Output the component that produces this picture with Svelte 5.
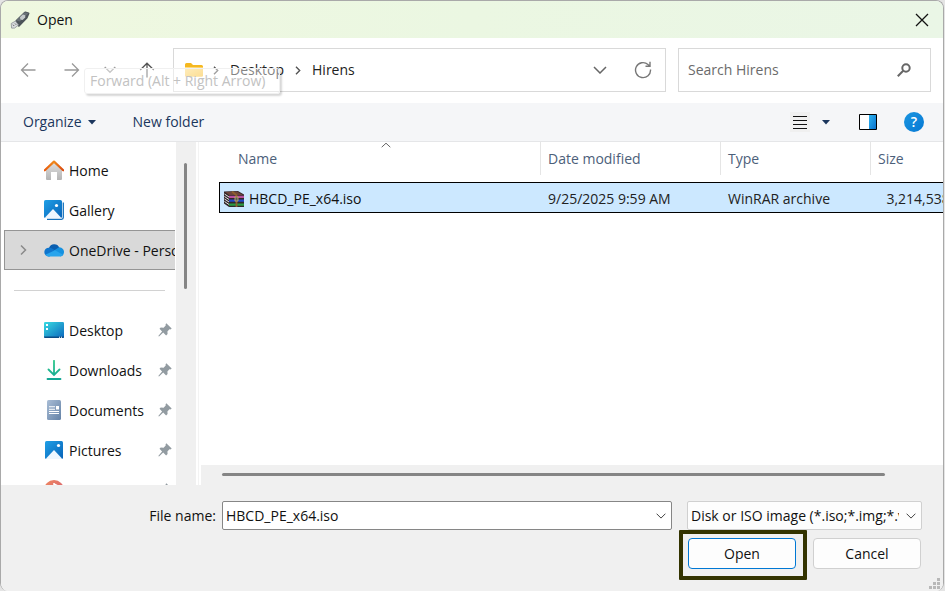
<script lang="ts">
	type Place = { name: string; icon: string; pinned?: boolean };

	const roots: Place[] = [
		{ name: 'Home', icon: 'home' },
		{ name: 'Gallery', icon: 'gallery' },
		{ name: 'OneDrive - Personal', icon: 'onedrive' }
	];

	const pinned: Place[] = [
		{ name: 'Desktop', icon: 'desktop', pinned: true },
		{ name: 'Downloads', icon: 'downloads', pinned: true },
		{ name: 'Documents', icon: 'documents', pinned: true },
		{ name: 'Pictures', icon: 'pictures', pinned: true },
		{ name: 'Music', icon: 'music', pinned: true }
	];

	const files = [
		{ name: 'HBCD_PE_x64.iso', modified: '9/25/2025 9:59 AM', type: 'WinRAR archive', size: '3,214,538 KB' }
	];

	let current = $state('OneDrive - Personal');
	let selected = $state('HBCD_PE_x64.iso');
	let fileName = $state('HBCD_PE_x64.iso');

	function pick(name: string) {
		selected = name;
		fileName = name;
	}
</script>

{#snippet placeIcon(icon: string)}
	<svg class="place-icon" viewBox="0 0 20 20" aria-hidden="true">
		{#if icon === 'home'}
			<path d="M2 9.500 10 2l8 7.500V19a1 1 0 0 1-1 1h-4v-8H7v8H3a1 1 0 0 1-1-1z" fill="url(#g-wall)" />
			<path d="M.8 10.300 10 1.600l9.200 8.700" fill="none" stroke="url(#g-roof)" stroke-width="2.200" stroke-linejoin="round" stroke-linecap="round" />
		{:else if icon === 'gallery'}
			<path d="M3 19.300h14.500a1.800 1.800 0 0 0 1.800-1.800V2.500" fill="none" stroke="#1672bd" stroke-width="1.300" />
			<rect width="18" height="18" rx="1.600" fill="url(#g-blue)" />
			<path d="M1 17.500 9 9l8 8.500q-.5.5-1 .5H2q-.6 0-1-.5z" fill="#eef7ff" />
			<circle cx="12.500" cy="5.500" r="1.600" fill="#fff" />
		{:else if icon === 'onedrive'}
			<path d="M5 8a5.500 5.500 0 0 1 10.300-.5L12 12 5 10z" fill="#0a5eb0" />
			<path d="M4.500 16.500A4.400 4.400 0 0 1 5 7.700q2 0 3.500 1l5 3-8 4.800z" fill="#0f75cd" />
			<path d="M10 10.500 15 7.300a4.700 4.700 0 0 1 4.800 6 4 4 0 0 1-3.300 3.200z" fill="#1591e0" />
			<path d="M1.300 14.700 11 10.200l8 4.500a4 4 0 0 1-3 1.800H4.500a4.200 4.200 0 0 1-3.200-1.800z" fill="#28a4ec" />
		{:else if icon === 'desktop'}
			<rect y="2" width="20" height="16" rx="1.300" fill="url(#g-desk)" />
			<path d="M0 16.500h20v.3A1.200 1.200 0 0 1 18.800 18H1.200A1.200 1.200 0 0 1 0 16.800z" fill="#0b4c86" />
			<path d="M2 4h2v2H2zM2 8h2v2H2zM15 16.700h1v1h-1zM17 16.700h1v1h-1z" fill="#fff" />
		{:else if icon === 'downloads'}
			<path d="M10 .8v14M4.500 9.500 10 15l5.500-5.500M3.500 19h13" fill="none" stroke="url(#g-down)" stroke-width="1.800" stroke-linecap="round" />
		{:else if icon === 'documents'}
			<rect x="3" width="14" height="20" rx="1.500" fill="url(#g-doc)" />
			<path d="M5 6.800h6M5 9.300h6M5 11.500h10M5 13.500h10" stroke="#fff" stroke-width="1.100" />
			<path d="M12 6h3v3.500h-3z" fill="#fff" />
		{:else if icon === 'pictures'}
			<rect x="1" y="1" width="18" height="18" rx="1.500" fill="url(#g-blue)" />
			<path d="M2 18.500 10 10l8 8.500q-.5.5-1 .5H3q-.6 0-1-.5z" fill="#eef7ff" />
			<circle cx="14.500" cy="5.500" r="1.600" fill="#fff" />
		{:else if icon === 'music'}
			<circle cx="10" cy="10" r="10" fill="url(#g-music)" />
			<path d="M10 3v10M10 4l4 2" stroke="#fff" stroke-width="1.500" />
		{/if}
	</svg>
{/snippet}

{#snippet placeRow(place: Place)}
	<li>
		<button class="place" class:current={current === place.name} onclick={() => (current = place.name)}>
			<span class="expander">
				{#if place.icon === 'onedrive'}
					<svg width="9" height="12" viewBox="0 0 9 12" aria-hidden="true">
						<path d="M1 1.500 5.500 6 1 10.500" fill="none" stroke="#8a8a8a" stroke-width="1.500" />
					</svg>
				{/if}
			</span>
			{@render placeIcon(place.icon)}
			<span class="place-name">{place.name}</span>
			{#if place.pinned}
				<svg class="pin" width="14" height="14" viewBox="0 0 14 14" aria-hidden="true">
					<path d="m8.300.3 5.400 5.200-1.300.9-1-.1-2 2.200.2 2.600-1.500 1.300-2.900-2.800L1 13.500.3 13l3.800-4.600-2.600-2.600 1.200-1.300 2.900.2 2.100-2.200-.1-1.300z" fill="#929ba1" />
				</svg>
			{/if}
		</button>
	</li>
{/snippet}

<!-- Shared gradients for the place icons -->
<svg class="defs" aria-hidden="true">
	<linearGradient id="g-wall" x2="0" y2="1"><stop stop-color="#e0e0e0" /><stop offset="1" stop-color="#b4b4b4" /></linearGradient>
	<linearGradient id="g-roof"><stop stop-color="#e8590c" /><stop offset=".5" stop-color="#f08a1c" /><stop offset="1" stop-color="#d9480f" /></linearGradient>
	<linearGradient id="g-blue" x2="1" y2="1"><stop stop-color="#1f9fe6" /><stop offset="1" stop-color="#0863b8" /></linearGradient>
	<linearGradient id="g-desk" x2="1" y2="1"><stop stop-color="#38dbe2" /><stop offset="1" stop-color="#0b66bd" /></linearGradient>
	<linearGradient id="g-down" gradientUnits="userSpaceOnUse" x1="0" y1="0" x2="0" y2="20"><stop stop-color="#2fc98b" /><stop offset="1" stop-color="#12a594" /></linearGradient>
	<linearGradient id="g-doc" x2="1" y2="1"><stop stop-color="#a9bdd6" /><stop offset="1" stop-color="#6482a6" /></linearGradient>
	<linearGradient id="g-music" x2="1" y2="1"><stop stop-color="#f0895f" /><stop offset="1" stop-color="#d05a78" /></linearGradient>
	<linearGradient id="g-pane" x2="1" y2="1"><stop stop-color="#2db4f0" /><stop offset="1" stop-color="#0a72cf" /></linearGradient>
	<linearGradient id="g-folder" x2="1" y2="1"><stop stop-color="#ffe08a" /><stop offset="1" stop-color="#f9c23c" /></linearGradient>
</svg>

<div class="dialog" role="dialog" aria-label="Open">
	<header class="titlebar">
		<svg width="20" height="18" viewBox="0 0 20 18" aria-hidden="true">
			<path d="M5.500 9.500 14.200.9q.6-.5 1.300-.3l3.300.8q1 .4.6 1.400l-1.900 4.400-8 8.300q-.7.6-1.300-.1l-3-4.800z" fill="#4d5459" />
			<path d="M6 9.300 14.500 1.200l4 1-8.700 8.400z" fill="#697177" />
			<path d="m10 6.200 2.800-2.600 2.400.6.1 2.300-2.700 2.600-2.200-.7z" fill="#c3c8ca" />
			<path d="m1.200 12.500 4.300-2.400 3 4-4 3H1.600z" fill="#d8dbdd" stroke="#8b9196" stroke-width=".8" />
			<path d="m3 13.700 1.200 1.300M5 12.500l1.200 1.300" stroke="#666" />
		</svg>
		<h1>Open</h1>
		<button class="close" aria-label="Close">
			<svg width="14" height="14" viewBox="0 0 14 14"><path d="m1 1 12 12M13 1 1 13" stroke="#111" stroke-width="1.300" /></svg>
		</button>
	</header>

	<div class="navbar">
		<button class="nav wide" aria-label="Back">
			<svg width="16" height="16" viewBox="0 0 16 16"><path d="M15.500 8H1.500M8 1.500 1.500 8 8 14.500" /></svg>
		</button>
		<button class="nav wide" aria-label="Forward">
			<svg width="16" height="16" viewBox="0 0 16 16"><path d="M.5 8h14M8 1.500 14.500 8 8 14.500" /></svg>
		</button>
		<button class="nav" aria-label="Recent locations">
			<svg width="12" height="8" viewBox="0 0 12 8"><path d="m.7 1 5.300 5.300L11.300 1" /></svg>
		</button>
		<button class="nav up" aria-label="Up">
			<svg width="16" height="16" viewBox="0 0 16 16"><path d="M8 15.500v-14M1.200 8 8 1.200 14.800 8" /></svg>
		</button>

		<div class="address">
			<svg width="18" height="16" viewBox="0 0 18 16" aria-hidden="true">
				<path d="M0 2.500A1.500 1.500 0 0 1 1.500 1H6l2 2h8.500A1.500 1.500 0 0 1 18 4.500V8H0z" fill="#f5b81f" />
				<path d="M0 5h18v8.500a1.300 1.300 0 0 1-1.300 1.300H1.300A1.300 1.300 0 0 1 0 13.500z" fill="url(#g-folder)" />
			</svg>
			<nav class="crumbs" aria-label="Path">
				<svg class="sep" width="6" height="9" viewBox="0 0 6 9" aria-hidden="true"><path d="m1 .8 3.700 3.700L1 8.200" /></svg>
				<a href="#desktop">Desktop</a>
				<svg class="sep" width="6" height="9" viewBox="0 0 6 9" aria-hidden="true"><path d="m1 .8 3.700 3.700L1 8.200" /></svg>
				<a href="#hirens">Hirens</a>
			</nav>
			<button class="tool" aria-label="Previous locations">
				<svg width="14" height="8" viewBox="0 0 14 8"><path d="m1 1 6 6 6-6" fill="none" stroke="#666" stroke-width="1.500" /></svg>
			</button>
			<button class="tool" aria-label="Refresh">
				<svg width="18" height="18" viewBox="0 0 18 18">
					<path d="M16.500 8.500A7.500 7.500 0 1 1 14 3.500l1.800 1.500M16 .8v4.400h-4.500" fill="none" stroke="#777" stroke-width="1.400" />
				</svg>
			</button>
		</div>

		<div class="search">
			<input type="text" aria-label="Search Hirens" placeholder="Search Hirens" />
			<svg width="14" height="14" viewBox="0 0 14 14" aria-hidden="true">
				<circle cx="9" cy="5" r="3.700" fill="none" stroke="#666" stroke-width="2" />
				<path d="M6.200 7.800.8 13.200" stroke="#666" stroke-width="2" />
			</svg>
		</div>

		<div class="tooltip" role="tooltip">Forward (Alt + Right Arrow)</div>
	</div>

	<div class="commands">
		<button class="organize">
			Organize
			<svg width="8" height="5" viewBox="0 0 8 5" aria-hidden="true"><path d="M0 0h8L4 4.500z" fill="#1b365d" /></svg>
		</button>
		<button>New folder</button>
		<button class="view" aria-label="Change your view">
			<svg width="20" height="20" viewBox="0 0 20 20">
				<rect width="20" height="20" fill="#f0f0f0" />
				<path d="M3 4.500h14M3 8.500h14M3 12.500h14M3 16.500h14" stroke="#111" />
			</svg>
		</button>
		<button class="more" aria-label="More view options">
			<svg width="8" height="5" viewBox="0 0 8 5"><path d="M0 0h8L4 4.500z" fill="#1b365d" /></svg>
		</button>
		<button class="preview" aria-label="Show the preview pane">
			<svg width="18" height="16" viewBox="0 0 18 16">
				<path d="M.5.5h17v15H.5z" fill="#fff" />
				<path d="M10 1h7v14h-7z" fill="url(#g-pane)" />
				<path d="M.5.5h17v15H.5z" fill="none" stroke="#000" />
			</svg>
		</button>
		<button class="help" aria-label="Get help">?</button>
	</div>

	<div class="body">
		<aside>
			<div class="places">
				<ul>
					{#each roots as place}
						{@render placeRow(place)}
					{/each}
				</ul>
				<hr />
				<ul>
					{#each pinned as place}
						{@render placeRow(place)}
					{/each}
				</ul>
			</div>
			<div class="vscroll"><div class="thumb"></div></div>
		</aside>

		<main>
			<div class="listing">
				<table>
					<thead>
						<tr>
							<th class="col-name">
								<div>
									Name
									<svg class="sort" width="10" height="6" viewBox="0 0 10 6" aria-hidden="true"><path d="m.7 5.200 4.300-4 4.300 4" fill="none" stroke="#666" /></svg>
								</div>
							</th>
							<th class="col-date"><div>Date modified</div></th>
							<th class="col-type"><div>Type</div></th>
							<th class="col-size"><div>Size</div></th>
						</tr>
					</thead>
					<tbody>
						{#each files as file}
							<tr class:selected={selected === file.name} onclick={() => pick(file.name)}>
								<td class="name">
									<span class="file">
										<svg width="20" height="16" viewBox="0 0 20 16" aria-hidden="true">
											<path d="M0 .5 14 0l6 3.500V16H5L0 12.500z" fill="#33282a" />
											<path d="m1 1 12-.5 6 3.500H5z" fill="#6d453b" />
											<path d="M5 4.800h15V7H5z" fill="#b8509f" />
											<path d="M5 8.500h15v2.300H5z" fill="#2347c4" />
											<path d="M5 12.500h15v2.200H5z" fill="#2a9a42" />
											<path d="m.5 3 4.500 3M.5 5.500l4.500 3M.5 8l4.500 3M.5 10.500l4.500 3" stroke="#e2e2e2" />
											<path d="m8 .5 4.500 3.700V16" fill="none" stroke="#8e6030" stroke-width="1.800" />
											<path d="M11 6h3v4h-3z" fill="#565c5c" stroke="#cdb06a" stroke-width=".8" />
										</svg>
										{file.name}
									</span>
								</td>
								<td>{file.modified}</td>
								<td>{file.type}</td>
								<td class="size">{file.size}</td>
							</tr>
						{/each}
					</tbody>
				</table>
			</div>
			<div class="hscroll"><div class="thumb"></div></div>
		</main>
	</div>

	<footer>
		<div class="fields">
			<label for="file-name">File name:</label>
			<div class="combo">
				<input id="file-name" type="text" bind:value={fileName} />
				<button aria-label="Show previous files">
					<svg width="10" height="6" viewBox="0 0 10 6"><path d="m.6.7 4.400 4.400L9.400.7" fill="none" stroke="#444" /></svg>
				</button>
			</div>
			<div class="filter">
				<select aria-label="File type">
					<option>Disk or ISO image (*.iso;*.img;*.vhd;*.zip)</option>
				</select>
				<svg width="10" height="6" viewBox="0 0 10 6" aria-hidden="true"><path d="m.6.7 4.400 4.400L9.400.7" fill="none" stroke="#444" /></svg>
			</div>
		</div>
		<div class="actions">
			<button class="action primary">Open</button>
			<button class="action">Cancel</button>
		</div>
		<svg class="grip" width="12" height="12" viewBox="0 0 12 12" aria-hidden="true">
			<path d="M8 0h3v3H8zM4 4h3v3H4zM8 4h3v3H8zM0 8h3v3H0zM4 8h3v3H4zM8 8h3v3H8z" fill="#b8b8b8" />
		</svg>
	</footer>
</div>

<style>
	:global(body) {
		background: #e4e4e4;
	}

	* {
		box-sizing: border-box;
	}

	.defs {
		position: absolute;
		width: 0;
		height: 0;
	}

	.dialog {
		display: flex;
		flex-direction: column;
		height: 100vh;
		margin-right: 1px;
		border: 1px solid #a9a9a9;
		border-bottom: 0;
		border-radius: 8px;
		overflow: hidden;
		background: #fff;
		color: #111;
		font-family: 'Open Sans', 'Noto Sans', sans-serif;
		font-size: 14px;
		line-height: 20px;
	}

	button,
	input,
	select {
		font: inherit;
		color: inherit;
	}

	button {
		padding: 0;
		border: 0;
		background: none;
	}

	svg {
		display: block;
		flex-shrink: 0;
	}

	.titlebar {
		display: flex;
		align-items: center;
		gap: 7px;
		height: 37px;
		flex-shrink: 0;
		padding: 0 14px 0 9px;
		background: linear-gradient(90deg, #eff8e0, #ebf7e2 50%, #eaf6e6);
	}

	.titlebar h1 {
		flex: 1;
		margin: 0;
		font-size: 14px;
		font-weight: 400;
	}

	.navbar {
		position: relative;
		display: flex;
		align-items: center;
		height: 65px;
		flex-shrink: 0;
		padding: 0 12px 1px 5px;
	}

	.nav {
		display: grid;
		place-items: center;
		width: 32px;
		height: 40px;
		flex-shrink: 0;
	}

	.nav.wide {
		width: 44px;
	}

	.nav.up {
		width: 42px;
	}

	.nav path {
		fill: none;
		stroke: #999;
		stroke-width: 1.3;
	}

	.nav.up path {
		stroke: #555;
	}

	.address,
	.search {
		display: flex;
		align-items: center;
		height: 44px;
		border: 1px solid #d9d9d9;
		background: #fff;
	}

	.address {
		flex: 1;
		min-width: 0;
		margin: 0 12px 0 5px;
		padding: 0 13px 0 11px;
		gap: 10px;
	}

	.crumbs {
		display: flex;
		align-items: center;
		flex: 1;
		gap: 11px;
	}

	.crumbs a {
		color: #222;
		text-decoration: none;
	}

	.sep path {
		fill: none;
		stroke: #555;
		stroke-width: 1.4;
	}

	.tool {
		display: grid;
		place-items: center;
		width: 18px;
		height: 30px;
		margin-left: 15px;
	}

	.search {
		width: 253px;
		padding: 0 19px 0 9px;
	}

	.search input {
		flex: 1;
		min-width: 0;
		padding: 0;
		border: 0;
		outline: 0;
		background: none;
	}

	.search input::placeholder {
		color: #6b6b6b;
		opacity: 1;
	}

	.tooltip {
		position: absolute;
		top: 30px;
		left: 83px;
		padding: 2px 14px 2px 5px;
		border: 1px solid #f0f0f0;
		border-radius: 3px;
		background: rgb(255 255 255 / 45%);
		box-shadow: 2px 2px 2px rgb(0 0 0 / 16%);
		color: #c2c2c2;
	}

	.commands {
		display: flex;
		align-items: center;
		height: 39px;
		flex-shrink: 0;
		padding: 0 19px 0 22px;
		border-bottom: 1px solid #e5e6e8;
		background: #f5f6f8;
		color: #1b365d;
	}

	.organize {
		display: flex;
		align-items: center;
		gap: 6px;
		margin-right: 37px;
	}

	.view {
		margin-left: auto;
	}

	.more {
		margin: 0 29px 0 12px;
	}

	.preview {
		margin-right: 27px;
	}

	.help {
		width: 20px;
		height: 20px;
		border-radius: 50%;
		background: linear-gradient(135deg, #1b96e0, #0678d4);
		color: #fff;
		font-weight: 600;
	}

	.body {
		display: flex;
		flex: 1;
		min-height: 0;
	}

	aside {
		display: flex;
		width: 198px;
		flex-shrink: 0;
		border-right: 1px solid #f3f3f3;
	}

	.places {
		width: 174px;
		padding: 8px 0 0 3px;
		overflow: hidden;
	}

	.places ul {
		margin: 0;
		padding: 0;
		list-style: none;
	}

	.places hr {
		margin: 20px 10px 19px;
		border: 0;
		border-top: 1px solid #d2d2d2;
	}

	.place {
		display: flex;
		align-items: center;
		width: 100%;
		height: 40px;
		padding-right: 2px;
		border: 1px solid transparent;
		text-align: left;
		white-space: nowrap;
	}

	.place.current {
		padding-right: 0;
		border-color: #959595;
		border-right: 0;
		background: #d9d9d9;
	}

	.expander {
		display: grid;
		place-items: center;
		width: 39px;
		flex-shrink: 0;
	}

	.place-icon {
		width: 20px;
		height: 20px;
		margin-right: 5px;
	}

	.place-name {
		flex: 1;
		min-width: 0;
		padding-top: 2px;
		overflow: hidden;
	}

	.vscroll {
		width: 20px;
		margin-left: 1px;
		padding: 21px 8px 0;
		background: #f0f0f0;
	}

	.thumb {
		border-radius: 2px;
		background: #858585;
	}

	.vscroll .thumb {
		width: 3px;
		height: 39%;
	}

	main {
		display: flex;
		flex-direction: column;
		flex: 1;
		min-width: 0;
		margin-left: 2px;
	}

	.listing {
		flex: 1;
		min-height: 0;
		padding-left: 18px;
		overflow: hidden;
	}

	table {
		width: 759px;
		table-layout: fixed;
		border-collapse: collapse;
	}

	th {
		height: 40px;
		padding: 0;
		color: #4c607a;
		font-weight: 400;
		text-align: left;
		vertical-align: top;
	}

	th div {
		position: relative;
		height: 33px;
		padding: 7px;
		border-right: 1px solid #e5e5e5;
	}

	.col-name {
		width: 322px;
		padding-left: 12px;
	}

	.col-date {
		width: 180px;
	}

	.col-type {
		width: 150px;
	}

	.sort {
		position: absolute;
		top: 0;
		left: calc(50% - 5px);
	}

	td {
		height: 31px;
		padding: 2px 7px 0;
		color: #222;
		white-space: nowrap;
	}

	td.name {
		padding-left: 5px;
		color: #111;
	}

	td.size {
		text-align: right;
	}

	tr.selected {
		outline: 1px solid #000;
		outline-offset: -1px;
		background: #cce8ff;
	}

	.file {
		display: flex;
		align-items: center;
		gap: 5px;
	}

	.hscroll {
		height: 20px;
		padding: 8px 58px 0 21px;
		background: #f0f0f0;
	}

	.hscroll .thumb {
		height: 3px;
	}

	footer {
		position: relative;
		flex-shrink: 0;
		padding: 16px 21px 22px 20px;
		background: #f0f0f0;
	}

	.fields {
		display: flex;
		align-items: center;
	}

	.fields label {
		width: 195px;
		margin-right: 6px;
		text-align: right;
	}

	.combo {
		display: flex;
		flex: 1;
		min-width: 0;
		height: 29px;
		padding-left: 3px;
		border: 1px solid #868686;
		border-radius: 2px;
		background: #fff;
	}

	.combo input {
		flex: 1;
		min-width: 0;
		padding: 0;
		border: 0;
		outline: 0;
		background: none;
	}

	.combo button {
		display: grid;
		place-items: center;
		width: 20px;
	}

	.filter {
		position: relative;
		width: 235px;
		margin-left: 15px;
	}

	.filter select {
		display: block;
		width: 100%;
		height: 29px;
		padding: 0 22px 0 3px;
		border: 1px solid #d0d0d0;
		border-radius: 2px;
		background: #fdfdfd;
		appearance: none;
	}

	.filter svg {
		position: absolute;
		top: 12px;
		right: 6px;
		pointer-events: none;
	}

	.actions {
		display: flex;
		justify-content: flex-end;
		gap: 17px;
		margin-top: 8px;
		padding-right: 1px;
	}

	.action {
		position: relative;
		width: 108px;
		height: 31px;
		border: 1px solid #d0d0d0;
		border-radius: 4px;
		background: #fdfdfd;
	}

	.action.primary {
		border-color: #0078d4;
	}

	/* Callout frame round the default action */
	.action.primary::after {
		content: '';
		position: absolute;
		inset: -9px -12px -12px -10px;
		border: 4px solid #333300;
		border-radius: 1px;
		pointer-events: none;
	}

	.grip {
		position: absolute;
		right: 2px;
		bottom: 1px;
	}
</style>
